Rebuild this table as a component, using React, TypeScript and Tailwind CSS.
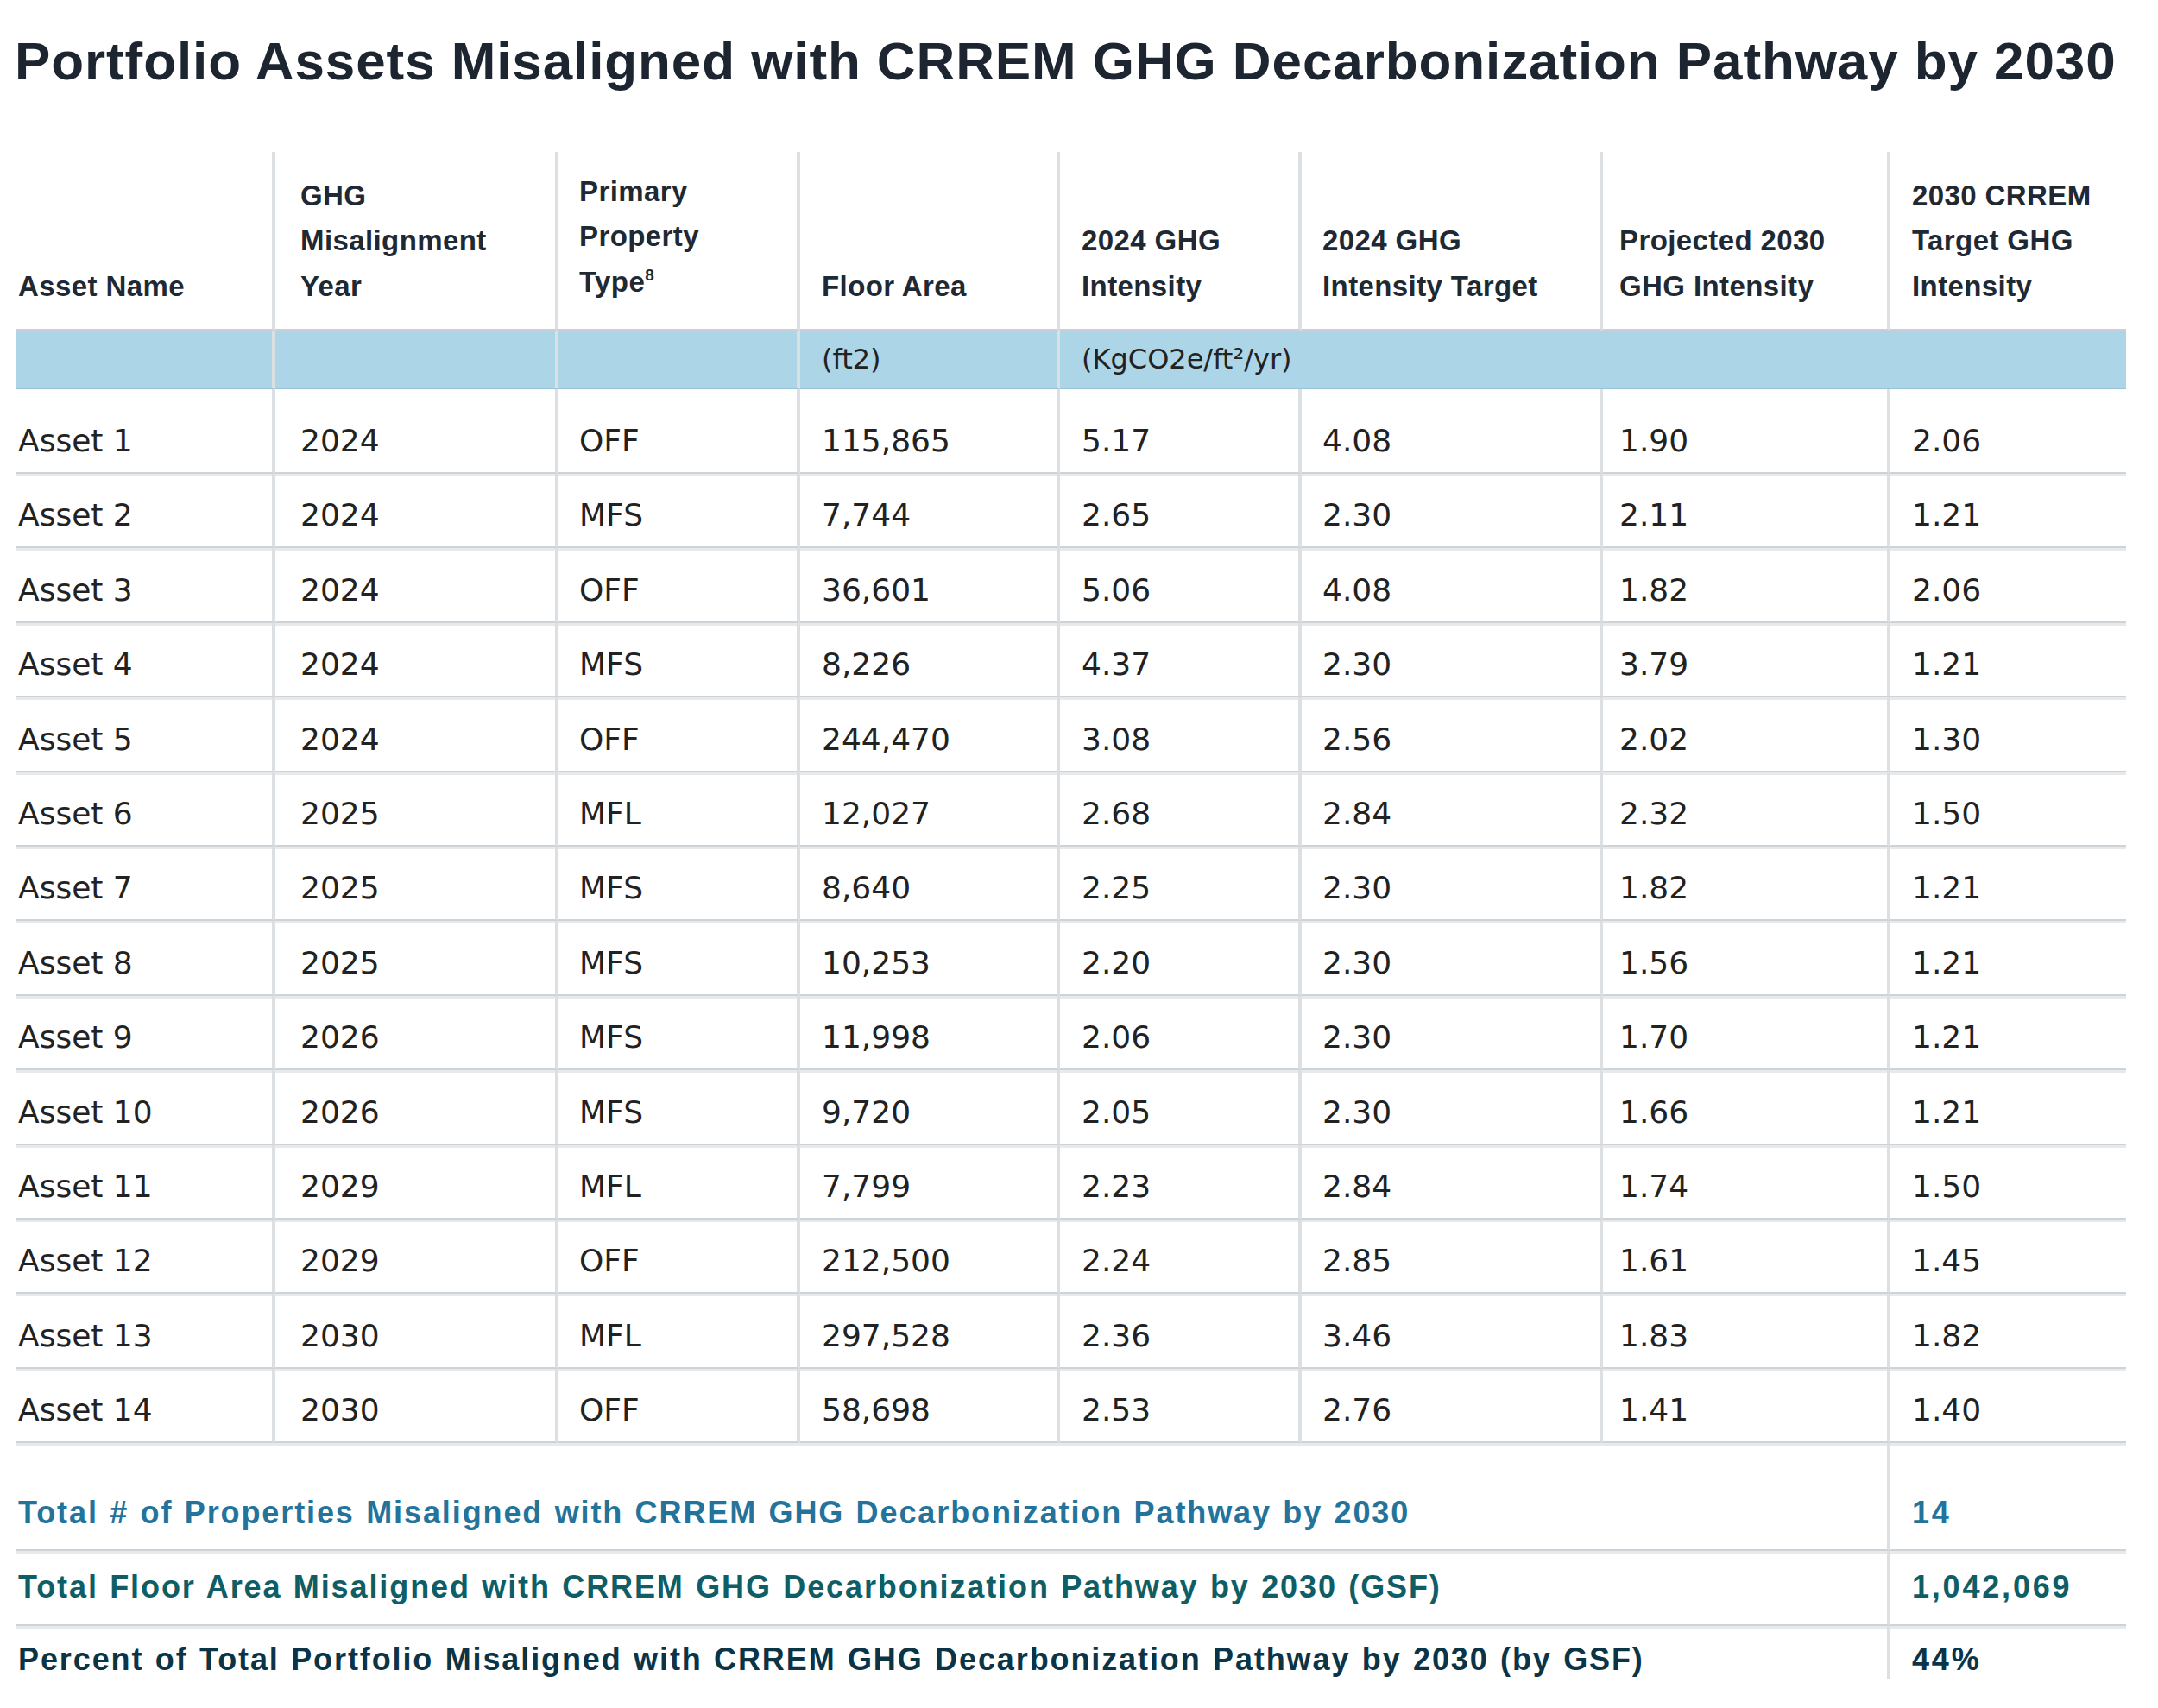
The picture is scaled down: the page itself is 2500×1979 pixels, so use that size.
const COLS = "grid-cols-[300px_328px_280px_301px_280px_349px_333px_273px]";
const PADS = ["pl-[2px]", "pl-[29px]", "pl-[24px]", "pl-[25px]", "pl-[25px]", "pl-[24px]", "pl-[19px]", "pl-[25px]"];
const VLINE = "border-r-4 border-r-[#dce0e3]";
const HLINE = "border-b-2 border-b-[#cdd3d7] shadow-[0_3px_0_0_#e6eaed]";
const SANS = "font-['Liberation_Sans',Arial,sans-serif]";
const DEJA = "font-['DejaVu_Sans',sans-serif]";

type Row = [string, string, string, string, string, string, string, string];

const rows: Row[] = [
  ["Asset 1", "2024", "OFF", "115,865", "5.17", "4.08", "1.90", "2.06"],
  ["Asset 2", "2024", "MFS", "7,744", "2.65", "2.30", "2.11", "1.21"],
  ["Asset 3", "2024", "OFF", "36,601", "5.06", "4.08", "1.82", "2.06"],
  ["Asset 4", "2024", "MFS", "8,226", "4.37", "2.30", "3.79", "1.21"],
  ["Asset 5", "2024", "OFF", "244,470", "3.08", "2.56", "2.02", "1.30"],
  ["Asset 6", "2025", "MFL", "12,027", "2.68", "2.84", "2.32", "1.50"],
  ["Asset 7", "2025", "MFS", "8,640", "2.25", "2.30", "1.82", "1.21"],
  ["Asset 8", "2025", "MFS", "10,253", "2.20", "2.30", "1.56", "1.21"],
  ["Asset 9", "2026", "MFS", "11,998", "2.06", "2.30", "1.70", "1.21"],
  ["Asset 10", "2026", "MFS", "9,720", "2.05", "2.30", "1.66", "1.21"],
  ["Asset 11", "2029", "MFL", "7,799", "2.23", "2.84", "1.74", "1.50"],
  ["Asset 12", "2029", "OFF", "212,500", "2.24", "2.85", "1.61", "1.45"],
  ["Asset 13", "2030", "MFL", "297,528", "2.36", "3.46", "1.83", "1.82"],
  ["Asset 14", "2030", "OFF", "58,698", "2.53", "2.76", "1.41", "1.40"],
];

const headers: React.ReactNode[] = [
  <>Asset Name</>,
  <>GHG<br />Misalignment<br />Year</>,
  <>Primary<br />Property<br />Type<span className="relative -top-[13px] text-[19px]">8</span></>,
  <>Floor Area</>,
  <>2024 GHG<br />Intensity</>,
  <>2024 GHG<br />Intensity Target</>,
  <>Projected 2030<br />GHG Intensity</>,
  <>2030 CRREM<br />Target GHG<br />Intensity</>,
];

const summary = [
  { label: "Total # of Properties Misaligned with CRREM GHG Decarbonization Pathway by 2030", value: "14", color: "text-[#23739b]", h: "h-[125px] pb-[20px]", line: true },
  { label: "Total Floor Area Misaligned with CRREM GHG Decarbonization Pathway by 2030 (GSF)", value: "1,042,069", color: "text-[#0f5e66]", h: "h-[87px] pb-[21px]", line: true },
  { label: "Percent of Total Portfolio Misaligned with CRREM GHG Decarbonization Pathway by 2030 (by GSF)", value: "44%", color: "text-[#0b3447]", h: "h-[61px] pb-0", line: false },
];

export default function App() {
  return (
    <div className="min-h-[1979px] w-[2500px] bg-white pt-[40px]">
      <h1 className={`${SANS} pl-[17px] text-[62px] font-bold leading-[62px] tracking-[0.9px] text-[#1c2530]`}>
        Portfolio Assets Misaligned with CRREM GHG Decarbonization Pathway by 2030
      </h1>

      <div className={`ml-[19px] mt-[74px] grid w-[2444px] ${COLS}`}>
        {headers.map((h, i) => (
          <div
            key={i}
            className={`${SANS} flex h-[207px] flex-col justify-end border-b-2 border-b-[#c9d0d5] pb-[23px] text-[33px] font-bold leading-[52.5px] tracking-[0.4px] text-[#1f2933] ${PADS[i]} ${i < 7 ? VLINE : ""}`}
          >
            <div>{h}</div>
          </div>
        ))}

        {[0, 1, 2].map((i) => (
          <div key={i} className={`h-[68px] border-b-2 border-b-[#98c3d8] bg-[#acd5e7] ${VLINE}`} />
        ))}
        <div className={`${DEJA} flex h-[68px] items-center border-b-2 border-b-[#98c3d8] bg-[#acd5e7] text-[32px] text-[#222] ${PADS[3]} ${VLINE}`}>
          (ft2)
        </div>
        <div className={`${DEJA} col-span-4 flex h-[68px] items-center border-b-2 border-b-[#98c3d8] bg-[#acd5e7] text-[32px] text-[#222] ${PADS[4]}`}>
          (KgCO2e/ft²/yr)
        </div>

        {rows.map((r, ri) =>
          r.map((c, ci) => (
            <div
              key={`${ri}-${ci}`}
              className={`${DEJA} flex items-end pb-[14px] text-[36px] leading-[44px] text-[#222] ${ri === 0 ? "h-[98px]" : "h-[86.4px]"} ${HLINE} ${PADS[ci]} ${ci < 7 ? VLINE : ""}`}
            >
              {c}
            </div>
          ))
        )}
      </div>

      <div className={`${SANS} ml-[19px] grid w-[2444px] grid-cols-[2171px_273px] text-[36px] font-bold leading-[44px]`}>
        {summary.map((s) => (
          <>
            <div key={s.label} className={`flex items-end pl-[2px] tracking-[1.9px] [word-spacing:1.5px] ${s.h} ${s.color} ${VLINE} ${s.line ? HLINE : ""}`}>
              {s.label}
            </div>
            <div key={s.value} className={`flex items-end pl-[25px] tracking-[2.8px] ${s.h} ${s.color} ${s.line ? HLINE : ""}`}>
              {s.value}
            </div>
          </>
        ))}
      </div>
    </div>
  );
}
